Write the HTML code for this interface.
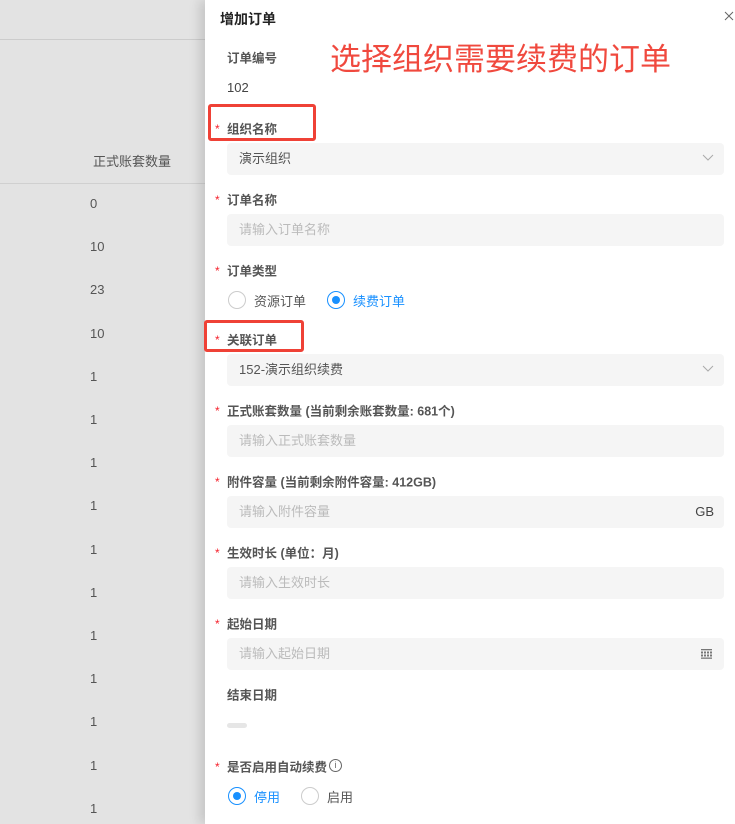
<!DOCTYPE html>
<html><head><meta charset="utf-8"><style>
*{margin:0;padding:0;box-sizing:border-box}
body{width:735px;height:824px;overflow:hidden;background:#e3e3e3;font-family:"Liberation Sans","Noto Sans CJK SC",sans-serif;position:relative;font-size:13px;color:#555}
.a{position:absolute;white-space:nowrap}
.num{left:90px;font-size:13px;color:#555}
.dr{position:absolute;left:205px;top:0;width:530px;height:824px;background:#fff;box-shadow:-6px 0 10px rgba(0,0,0,.12)}
.lb{left:227px;font-size:12.5px;color:#555;font-weight:bold;transform:translateY(-50%)}
.st{left:215px;color:#f5222d;font-size:12px;transform:translateY(-50%)}
.in{left:227px;width:497px;height:32px;background:#f5f5f5;border-radius:4px;padding-left:12px;line-height:32px;font-size:13px;color:#bbb}
.rd{width:18px;height:18px;border:1.5px solid #ccc;border-radius:50%}
.rd.on{border-color:#1890ff}
.rd.on:after{content:"";position:absolute;left:3.5px;top:3.5px;width:8px;height:8px;border-radius:50%;background:#1890ff}
.box{border:3px solid #ef4136;border-radius:3px}
.chev{position:absolute;right:10px;top:11px}
</style></head><body>
<div class="a" style="left:0;top:39px;width:205px;height:1px;background:#ccc"></div>
<div class="a" style="left:93px;top:151px;font-size:13px;color:#555">正式账套数量</div>
<div class="a" style="left:0;top:183px;width:205px;height:1px;background:#d0d0d0"></div>
<div class="a num" style="top:196px">0</div>
<div class="a num" style="top:239px">10</div>
<div class="a num" style="top:282px">23</div>
<div class="a num" style="top:326px">10</div>
<div class="a num" style="top:369px">1</div>
<div class="a num" style="top:412px">1</div>
<div class="a num" style="top:455px">1</div>
<div class="a num" style="top:498px">1</div>
<div class="a num" style="top:542px">1</div>
<div class="a num" style="top:585px">1</div>
<div class="a num" style="top:628px">1</div>
<div class="a num" style="top:671px">1</div>
<div class="a num" style="top:714px">1</div>
<div class="a num" style="top:758px">1</div>
<div class="a num" style="top:801px">1</div>
<div class="dr"></div>
<div class="a" style="left:220px;top:9px;font-size:14px;font-weight:bold;color:#222">增加订单</div>
<svg class="a" style="left:724px;top:11px" width="10" height="10"><path d="M1 1L9 9M9 1L1 9" stroke="#666" stroke-width="1"/></svg>
<div class="a" style="left:330px;top:34px;font-size:31px;color:#f0493e">选择组织需要续费的订单</div>
<div class="a lb" style="top:57px">订单编号</div>
<div class="a" style="left:227px;top:80px;color:#444">102</div>
<div class="a st" style="top:129px">*</div><div class="a lb" style="top:128px">组织名称</div>
<div class="a in" style="top:143px;color:#555">演示组织<svg class="chev" width="12" height="8"><path d="M1 1L6 6L11 1" stroke="#aaa" fill="none"/></svg></div>
<div class="a st" style="top:200px">*</div><div class="a lb" style="top:199px">订单名称</div>
<div class="a in" style="top:214px">请输入订单名称</div>
<div class="a st" style="top:271px">*</div><div class="a lb" style="top:270px">订单类型</div>
<div class="a rd" style="left:228px;top:291px"></div><div class="a" style="left:254px;top:291px;color:#555">资源订单</div>
<div class="a rd on" style="left:327px;top:291px"></div><div class="a" style="left:353px;top:291px;color:#1890ff">续费订单</div>
<div class="a st" style="top:340px">*</div><div class="a lb" style="top:339px">关联订单</div>
<div class="a in" style="top:354px;color:#555">152-演示组织续费<svg class="chev" width="12" height="8"><path d="M1 1L6 6L11 1" stroke="#aaa" fill="none"/></svg></div>
<div class="a st" style="top:411px">*</div><div class="a lb" style="top:410px">正式账套数量 (当前剩余账套数量: 681个)</div>
<div class="a in" style="top:425px">请输入正式账套数量</div>
<div class="a st" style="top:482px">*</div><div class="a lb" style="top:481px">附件容量 (当前剩余附件容量: 412GB)</div>
<div class="a in" style="top:496px">请输入附件容量<span style="position:absolute;right:10px;color:#444">GB</span></div>
<div class="a st" style="top:553px">*</div><div class="a lb" style="top:552px">生效时长 (单位：月)</div>
<div class="a in" style="top:567px">请输入生效时长</div>
<div class="a st" style="top:624px">*</div><div class="a lb" style="top:623px">起始日期</div>
<div class="a in" style="top:638px">请输入起始日期<svg style="position:absolute;right:12px;top:11px" width="11" height="10"><g fill="#777"><rect x="0" y="0" width="11" height="1.3"/><rect x="0" y="2.5" width="2" height="2"/><rect x="3" y="2.5" width="2" height="2"/><rect x="6" y="2.5" width="2" height="2"/><rect x="9" y="2.5" width="2" height="2"/><rect x="0" y="5.5" width="2" height="2"/><rect x="3" y="5.5" width="2" height="2"/><rect x="6" y="5.5" width="2" height="2"/><rect x="9" y="5.5" width="2" height="2"/><rect x="0" y="8.5" width="11" height="1.3"/></g></svg></div>
<div class="a lb" style="top:694px">结束日期</div>
<div class="a" style="left:227px;top:723px;width:20px;height:5px;border-radius:3px;background:#e6e6e6"></div>
<div class="a st" style="top:767px">*</div><div class="a lb" style="top:766px">是否启用自动续费</div>
<div class="a" style="left:329px;top:759px;width:13px;height:13px;border:1px solid #666;border-radius:50%;font-size:9px;line-height:11px;text-align:center;color:#666">i</div>
<div class="a rd on" style="left:228px;top:787px"></div><div class="a" style="left:254px;top:787px;color:#1890ff">停用</div>
<div class="a rd" style="left:301px;top:787px"></div><div class="a" style="left:327px;top:787px;color:#555">启用</div>
<div class="a box" style="left:208px;top:104px;width:108px;height:37px"></div>
<div class="a box" style="left:204px;top:320px;width:100px;height:32px"></div>
</body></html>
